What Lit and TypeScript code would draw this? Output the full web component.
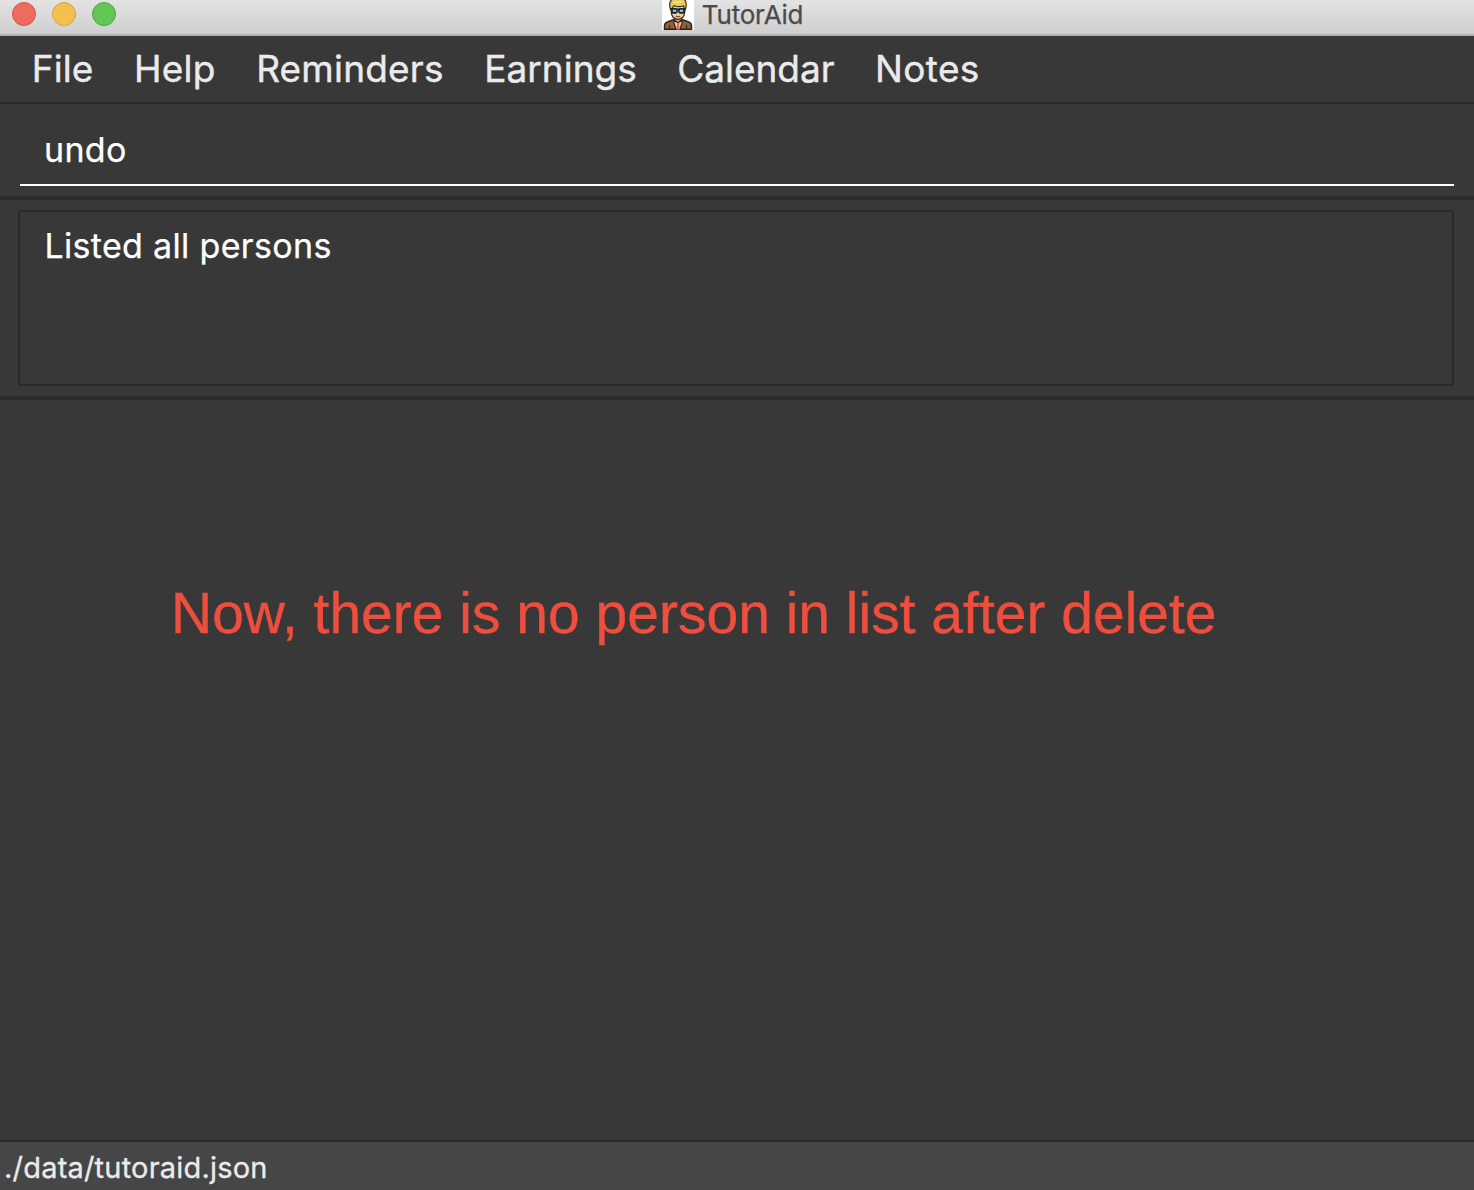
import { LitElement, html, css } from "lit";
import { customElement } from "lit/decorators.js";
import { styleMap } from "lit/directives/style-map.js";

interface MenuEntry {
  label: string;
  tracking: number;
}

const MENUS: MenuEntry[] = [
  { label: "File", tracking: 0.1 },
  { label: "Help", tracking: 0.25 },
  { label: "Reminders", tracking: 0.2 },
  { label: "Earnings", tracking: 0.03 },
  { label: "Calendar", tracking: -0.05 },
  { label: "Notes", tracking: 0.35 },
];

@customElement("tutor-avatar")
class TutorAvatar extends LitElement {
  static styles = css`
    :host { display: block; width: 32px; height: 30px; }
    svg { display: block; }
  `;

  render() {
    return html`
      <svg width="32" height="30" viewBox="0 0 32 30">
        <rect width="32" height="30" fill="#fff" />
        <path d="M2.500 29.300V26q0-3.200 3.500-4.200l6-2.300h8l6 2.300q3.500 1 3.500 4.200v3.300z" fill="#94603c" stroke="#2b211c" stroke-width="1.500" />
        <path d="M12.500 20l3.500 3 3.500-3 .8 2.500-2.300 6.800h-4l-2.300-6.800z" fill="#e8c7ae" stroke="#33251f" stroke-width="1.200" />
        <path d="M14.500 22.500h3l-.6 2 1.100 5h-4l1.100-5z" fill="#e8695a" />
        <path d="M7.500 25v4M24.500 25v4" stroke="#3a271d" stroke-width="1.300" />
        <path d="M12.600 16v3.700l3.400 2.600 3.400-2.600V16z" fill="#e9b184" stroke="#3a2a22" stroke-width="1" />
        <path d="M9.300 5v7q.3 6.800 6.700 7.300 6.400-.5 6.700-7.300V5z" fill="#f8cfa2" stroke="#30251f" stroke-width="1.300" />
        <path d="M8.500 9.500Q6.500 3.500 9 .5L10-1h12q3.500 3 1.500 10.500l-1.200-1-.8-2.800q-4.500 1.800-9.500 0L9.800 8.500z" fill="#e8c75f" stroke="#3d3018" stroke-width="1.200" />
        <path d="M11 2q5 1.500 9.500-.6" fill="none" stroke="#f8e391" stroke-width="1.500" />
        <path d="M8.300 9.300h15.400" stroke="#172027" stroke-width="1.500" />
        <rect x="10" y="8.800" width="5" height="4.100" rx="1.500" fill="#72cbd5" stroke="#172027" stroke-width="1.600" />
        <rect x="17" y="8.800" width="5" height="4.100" rx="1.500" fill="#72cbd5" stroke="#172027" stroke-width="1.600" />
        <path d="M13.700 16q2.300 1.500 4.600 0" fill="none" stroke="#7b4534" stroke-width="1.200" />
      </svg>
    `;
  }
}

@customElement("app-root")
class AppRoot extends LitElement {
  static styles = css`
    :host {
      display: flex;
      flex-direction: column;
      height: 1190px;
      overflow: hidden;
      background: #383838;
      font-family: Inter, "Liberation Sans", sans-serif;
      white-space: nowrap;
    }
    .titlebar {
      box-sizing: border-box;
      flex: none;
      display: grid;
      grid-template-columns: 662px auto 1fr;
      align-items: start;
      height: 36px;
      border-bottom: 2px solid #b2b2b2;
      background: linear-gradient(#e3e3e3, #cecece);
    }
    .lights { display: flex; gap: 16px; padding: 2px 0 0 12px; }
    .light {
      box-sizing: border-box;
      width: 24px;
      height: 24px;
      border-radius: 50%;
      border: 1px solid;
    }
    .close { background: #ed6b5f; border-color: #d35549; }
    .minimise { background: #f5bf4f; border-color: #d9a23c; }
    .zoom { background: #61c654; border-color: #4ba73f; }
    .title {
      padding-left: 7.8px;
      font-size: 26px;
      line-height: 29px;
      letter-spacing: -0.2px;
      color: #4b4b4b;
      -webkit-text-stroke: 0.25px currentColor;
    }
    .menubar {
      box-sizing: border-box;
      flex: none;
      display: flex;
      gap: 40.5px;
      height: 68px;
      padding-left: 31.7px;
      border-bottom: 2px solid #2b2b2b;
      font-size: 37px;
      line-height: 65px;
      color: #ebebeb;
      -webkit-text-stroke: 0.4px currentColor;
    }
    .command {
      box-sizing: border-box;
      flex: none;
      height: 96px;
      padding: 0 20px 10px;
      border-bottom: 4px solid #2b2b2b;
    }
    .field {
      box-sizing: border-box;
      height: 82px;
      padding: 9px 24px 0;
      border-bottom: 2px solid #fff;
    }
    .entry {
      font-size: 34px;
      line-height: 73px;
      letter-spacing: 0.3px;
      color: #fff;
      -webkit-text-stroke: 0.25px currentColor;
    }
    .result {
      box-sizing: border-box;
      flex: none;
      height: 200px;
      padding: 10px 20px 10px 18px;
      border-bottom: 4px solid #2b2b2b;
    }
    .output {
      box-sizing: border-box;
      height: 176px;
      padding: 13px 24px 0 24.4px;
      border: 2px solid #2b2b2b;
      font-size: 34px;
      line-height: 41px;
      letter-spacing: 0.33px;
      color: #fff;
      -webkit-text-stroke: 0.25px currentColor;
    }
    .content {
      flex: 1;
      padding: 181px 0 0 171px;
      font-family: "Liberation Sans", Arial, sans-serif;
      font-size: 57px;
      line-height: 65px;
      color: #ee4e3d;
      -webkit-text-stroke: 0.4px currentColor;
    }
    .status {
      box-sizing: border-box;
      flex: none;
      height: 50px;
      padding: 3px 4px 0;
      border-top: 2px solid #2b2b2b;
      background: #464646;
      font-size: 29px;
      line-height: 45px;
      letter-spacing: 0.2px;
      color: #ebebeb;
      -webkit-text-stroke: 0.3px currentColor;
    }
  `;

  render() {
    return html`
      <div class="titlebar">
        <div class="lights">
          <span class="light close"></span>
          <span class="light minimise"></span>
          <span class="light zoom"></span>
        </div>
        <tutor-avatar></tutor-avatar>
        <div class="title">TutorAid</div>
      </div>
      <div class="menubar">
        ${MENUS.map(
          (m) => html`<span style=${styleMap({ letterSpacing: `${m.tracking}px` })}>${m.label}</span>`
        )}
      </div>
      <div class="command"><div class="field"><div class="entry">undo</div></div></div>
      <div class="result"><div class="output">Listed all persons</div></div>
      <div class="content">Now, there is no person in list after delete</div>
      <div class="status">./data/tutoraid.json</div>
    `;
  }
}
